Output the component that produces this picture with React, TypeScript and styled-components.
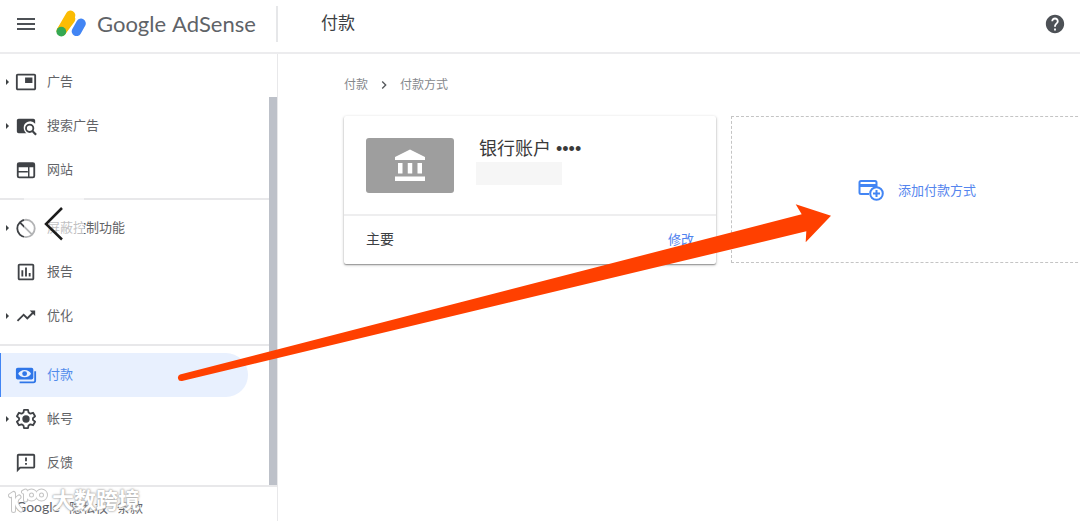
import React from "react";
import styled, { createGlobalStyle } from "styled-components";
import {
  MdAccountBalance,
  MdChevronRight,
  MdHelp,
  MdMenu,
  MdOutlineAssessment,
  MdOutlineFeedback,
  MdPictureInPicture,
  MdTrendingUp,
} from "react-icons/md";

const GlobalStyle = createGlobalStyle`
  * { box-sizing: border-box; }
  body {
    margin: 0;
    background: #fff;
    color: #3c4043;
    font-family: "Liberation Sans", "Noto Sans CJK SC", sans-serif;
    font-size: 13px;
  }
  button { font: inherit; border: 0; padding: 0; background: none; cursor: pointer; }
  a { text-decoration: none; color: inherit; }
  svg { display: block; flex: none; }
`;

const Page = styled.div`
  position: relative;
  display: flex;
  flex-direction: column;
  min-height: 100vh;
  overflow: hidden;
`;

const Header = styled.header`
  display: flex;
  align-items: center;
  height: 54px;
  padding: 0 14px 4px;
  border-bottom: 2px solid #ececee;
`;

const IconButton = styled.button`
  display: flex;
  color: #4d5156;
`;

const Brand = styled.a`
  display: flex;
  align-items: center;
  gap: 10px;
  width: 221px;
  margin-left: 17px;
`;

const BrandName = styled.span`
  display: flex;
  gap: 6px;
  font-family: Lato, sans-serif;
  font-size: 22px;
  line-height: 32px;
  color: #5f6368;
`;

const HeaderTitle = styled.h1`
  flex: 1;
  margin: 0;
  padding-left: 43px;
  border-left: 2px solid #e6e7e9;
  font-size: 17px;
  font-weight: 400;
  line-height: 36px;
`;

const Body = styled.div`
  display: flex;
  flex: 1;
`;

const Sidebar = styled.aside`
  display: flex;
  flex-direction: column;
  flex: none;
  width: 278px;
  border-right: 1px solid #e8e8ea;
`;

const Scroller = styled.div`
  display: flex;
`;

const Nav = styled.nav`
  flex: 1;
`;

const ScrollThumb = styled.div`
  width: 8px;
  margin-top: 43px;
  background: #bdc1c9;
`;

const Group = styled.ul`
  margin: 0;
  padding: 6px 0;
  list-style: none;
  border-bottom: 2px solid #e8e8ea;
  &:last-child { padding: 7px 0 0; border-bottom: 0; }
`;

const NavLink = styled.a<{ $active?: boolean }>`
  display: flex;
  align-items: center;
  height: 44px;
  margin-right: 21px;
  border-left: 1px solid ${(p) => (p.$active ? "#4285f4" : "transparent")};
  border-radius: 0 22px 22px 0;
  background: ${(p) => (p.$active ? "#e8f0fe" : "transparent")};
  color: ${(p) => (p.$active ? "#2f76e8" : "#3f4246")};
`;

const Expander = styled.span<{ $shown?: boolean }>`
  margin: 0 6px 0 5px;
  border: 3px solid transparent;
  border-right: 0;
  border-left-color: ${(p) => (p.$shown ? "#3c4043" : "transparent")};
`;

const NavLabel = styled.span`
  margin-left: 10px;
  line-height: 20px;
  opacity: 0.82;
`;

const Footer = styled.footer`
  display: flex;
  align-items: center;
  gap: 9px;
  height: 34px;
  padding: 6px 16px 0;
  border-top: 2px solid #e8e8ea;
  color: #5f6368;
`;

const FooterBrand = styled.span`
  font-family: Lato, sans-serif;
  font-size: 14px;
`;

const Main = styled.main`
  flex: 1;
  min-width: 0;
  padding: 21px 0 0 66px;
`;

const Breadcrumb = styled.nav`
  display: flex;
  align-items: center;
  gap: 8px;
  font-size: 12px;
  line-height: 20px;
  color: #85888c;
`;

const Cards = styled.div`
  display: flex;
  gap: 15px;
  margin-top: 21px;
`;

const Card = styled.section`
  flex: 0 0 372px;
  border-radius: 2px;
  box-shadow: 0 1px 3px rgba(0, 0, 0, 0.3), 0 1px 1px rgba(0, 0, 0, 0.25);
`;

const CardTop = styled.div`
  display: flex;
  gap: 22px;
  height: 98px;
  padding: 22px 22px 0;
`;

const BankBadge = styled.div`
  display: flex;
  align-items: center;
  justify-content: center;
  width: 88px;
  height: 55px;
  border-radius: 3px;
  background: #9e9e9e;
  color: #fff;
`;

const AccountName = styled.h2`
  display: flex;
  align-items: center;
  gap: 5px;
  margin: 0 0 2px;
  padding-left: 3px;
  font-size: 18px;
  font-weight: 400;
  line-height: 22px;
  color: #3a3a3a;
`;

const Redacted = styled.div`
  width: 86px;
  height: 23px;
  background: #f6f6f6;
`;

const CardBottom = styled.div`
  display: flex;
  align-items: center;
  justify-content: space-between;
  height: 50px;
  padding: 0 22px 4px;
  border-top: 2px solid #eeeeef;
  font-size: 14px;
`;

const EditButton = styled.button`
  && { font-size: 13px; }
  color: #4f82ee;
`;

const AddButton = styled.button`
  && { border: 1px dashed #c4c4c4; }
  display: flex;
  flex: 0 0 372px;
  align-items: center;
  justify-content: center;
  gap: 14px;
  height: 147px;
  color: #5585ee;
`;

const ArrowOverlay = styled.svg`
  position: absolute;
  left: 170px;
  top: 200px;
  pointer-events: none;
`;

const BackButton = styled.button`
  position: absolute;
  left: 24px;
  top: 194px;
  width: 60px;
  height: 60px;
  && { background: rgba(255, 255, 255, 0.6); }
`;

const Watermark = styled.div`
  position: absolute;
  left: 8px;
  top: 486px;
  display: flex;
  align-items: center;
  gap: 4px;
  font-size: 22px;
  font-weight: 700;
  line-height: 30px;
  color: #fff;
  text-shadow: 0 0 1px #aaa, 0 0 2px #aaa, 0 0 3px #bbb;
`;

const BrandLogo = () => (
  <svg width="32" height="30" viewBox="54 7 32 30" fill="none" strokeLinecap="round" strokeWidth="9.6">
    <path d="M60.500 29L69.500 17" stroke="#fbbc04" />
    <path d="M60.500 29L69.500 13.300" stroke="#fbbc04" />
    <path d="M75.500 29.300L80 21.400" stroke="#4285f4" />
    <circle cx="60.300" cy="29.600" r="4.900" fill="#34a853" />
  </svg>
);

const SearchAdsIcon = () => (
  <svg width="22" height="22" viewBox="0 0 24 24">
    <path fill="currentColor" d="M4 4h16a2 2 0 0 1 2 2v3.500A7 7 0 0 0 9.500 14c0 2.500 1 4.500 3 6H4a2 2 0 0 1-2-2V6c0-1.100.9-2 2-2z" />
    <circle cx="16" cy="14.500" r="4" fill="none" stroke="currentColor" strokeWidth="2" />
    <path d="M19 17.500l4 4" stroke="currentColor" strokeWidth="2.400" />
  </svg>
);

const SiteIcon = () => (
  <svg width="22" height="22" viewBox="0 0 24 24" fill="none" stroke="currentColor" strokeWidth="2">
    <rect x="3" y="4.500" width="18" height="15.500" rx="1.500" />
    <path d="M3 7h18" strokeWidth="4" />
    <path d="M3 14h11M15 8v12" strokeWidth="1.600" />
  </svg>
);

const BlockIcon = () => (
  <svg width="22" height="22" viewBox="0 0 24 24" fill="none" stroke="currentColor" strokeWidth="2">
    <circle cx="12" cy="12.500" r="9.500" />
    <path d="M5.300 5.800l13.400 13.400" />
  </svg>
);

const PaymentsIcon = () => (
  <svg width="22" height="22" viewBox="0 0 24 24">
    <path fill="currentColor" fillRule="evenodd" d="M3 4h15a2 2 0 0 1 2 2v9a2 2 0 0 1-2 2H3a2 2 0 0 1-2-2V6c0-1.100.9-2 2-2zm7.500 2.500C7 6.500 4.500 8.500 3.500 10.500c1 2 3.500 4 7 4s6-2 7-4c-1-2-3.500-4-7-4z" />
    <circle cx="10.500" cy="10.500" r="2.600" fill="currentColor" />
    <path fill="none" stroke="currentColor" strokeWidth="2" d="M22 8v10a2 2 0 0 1-2 2H5" />
  </svg>
);

const GearIcon = () => (
  <svg width="22" height="22" viewBox="0 0 24 24">
    <path fill="none" stroke="currentColor" strokeWidth="2" strokeLinejoin="round" d="M9.800 2h4.400l.6 3 2 1.200 2.900-1 2.200 3.800-2.300 2v2l2.300 2-2.200 3.800-2.900-1-2 1.200-.6 3H9.800l-.6-3-2-1.200-2.900 1L2.100 15l2.300-2v-2L2.100 9l2.200-3.800 2.900 1 2-1.200z" />
    <circle cx="12" cy="12" r="4" fill="currentColor" />
  </svg>
);

const AddCardIcon = () => (
  <svg width="26" height="22" viewBox="0 0 26 22" fill="none" stroke="#4285f4" strokeWidth="2">
    <path d="M11 15H3a1.500 1.500 0 0 1-1.500-1.500v-10A1.500 1.500 0 0 1 3 2h14a1.500 1.500 0 0 1 1.500 1.500V8" />
    <path d="M1.500 6.500h17" strokeWidth="3" />
    <circle cx="18.500" cy="14.500" r="6.300" />
    <path d="M18.500 11v7M15 14.500h7" />
  </svg>
);

const MarkShape = () => (
  <>
    <path d="M10.500 494.500l3-2v17M19 496c-3 2-3.500 5-2 8 1 2 2 3.500 4 5M25.500 499v-9l-2 1" />
    <circle cx="31.500" cy="494" r="4" />
    <circle cx="41.500" cy="494" r="4" />
  </>
);

type Item = { label: string; icon: React.ReactNode; expandable?: boolean; active?: boolean };

const groups: Item[][] = [
  [
    { label: "广告", icon: <MdPictureInPicture size={22} />, expandable: true },
    { label: "搜索广告", icon: <SearchAdsIcon />, expandable: true },
    { label: "网站", icon: <SiteIcon /> },
  ],
  [
    { label: "屏蔽控制功能", icon: <BlockIcon />, expandable: true },
    { label: "报告", icon: <MdOutlineAssessment size={22} /> },
    { label: "优化", icon: <MdTrendingUp size={22} />, expandable: true },
  ],
  [
    { label: "付款", icon: <PaymentsIcon />, active: true },
    { label: "帐号", icon: <GearIcon />, expandable: true },
    { label: "反馈", icon: <MdOutlineFeedback size={22} /> },
  ],
];

export default function App() {
  return (
    <Page>
      <GlobalStyle />
      <Header>
        <IconButton aria-label="菜单"><MdMenu size={24} /></IconButton>
        <Brand href="#">
          <BrandLogo />
          <BrandName><span>Google</span><span>AdSense</span></BrandName>
        </Brand>
        <HeaderTitle>付款</HeaderTitle>
        <IconButton aria-label="帮助"><MdHelp size={22} /></IconButton>
      </Header>
      <Body>
        <Sidebar>
          <Scroller>
            <Nav>
              {groups.map((group, i) => (
                <Group key={i}>
                  {group.map((item) => (
                    <li key={item.label}>
                      <NavLink href="#" $active={item.active}>
                        <Expander $shown={item.expandable} />
                        {item.icon}
                        <NavLabel>{item.label}</NavLabel>
                      </NavLink>
                    </li>
                  ))}
                </Group>
              ))}
            </Nav>
            <ScrollThumb />
          </Scroller>
          <Footer>
            <FooterBrand>Google</FooterBrand>
            <a href="#">隐私权</a>
            <a href="#">条款</a>
          </Footer>
        </Sidebar>
        <Main>
          <Breadcrumb>
            <a href="#">付款</a>
            <MdChevronRight size={16} color="#55585c" />
            <span>付款方式</span>
          </Breadcrumb>
          <Cards>
            <Card>
              <CardTop>
                <BankBadge><MdAccountBalance size={36} /></BankBadge>
                <div>
                  <AccountName><span>银行账户</span><span>••••</span></AccountName>
                  <Redacted />
                </div>
              </CardTop>
              <CardBottom>
                <span>主要</span>
                <EditButton>修改</EditButton>
              </CardBottom>
            </Card>
            <AddButton><AddCardIcon />添加付款方式</AddButton>
          </Cards>
        </Main>
      </Body>
      <BackButton aria-label="返回">
        <svg width="60" height="60" viewBox="24 194 60 60" fill="none" stroke="#1c1c1c" strokeWidth="2.500">
          <path d="M62 208L46 224L62 239.500" />
        </svg>
      </BackButton>
      <ArrowOverlay width="670" height="190" viewBox="170 200 670 190">
        <path fill="#ff4000" d="M180 374.500L801.700 214.300L795.700 204.300L831 215.700L805.700 242.300L806.300 231.300L182 381Q178.500 381.500 178 378.500Q177.500 375.500 180 374.500Z" />
      </ArrowOverlay>
      <Watermark>
        <svg width="40" height="28" viewBox="8 486 40 28" fill="none" strokeLinecap="round" strokeLinejoin="round">
          <g stroke="#c4c4c4" strokeWidth="5"><MarkShape /></g>
          <g stroke="#fff" strokeWidth="3"><MarkShape /></g>
        </svg>
        大数跨境
      </Watermark>
    </Page>
  );
}
